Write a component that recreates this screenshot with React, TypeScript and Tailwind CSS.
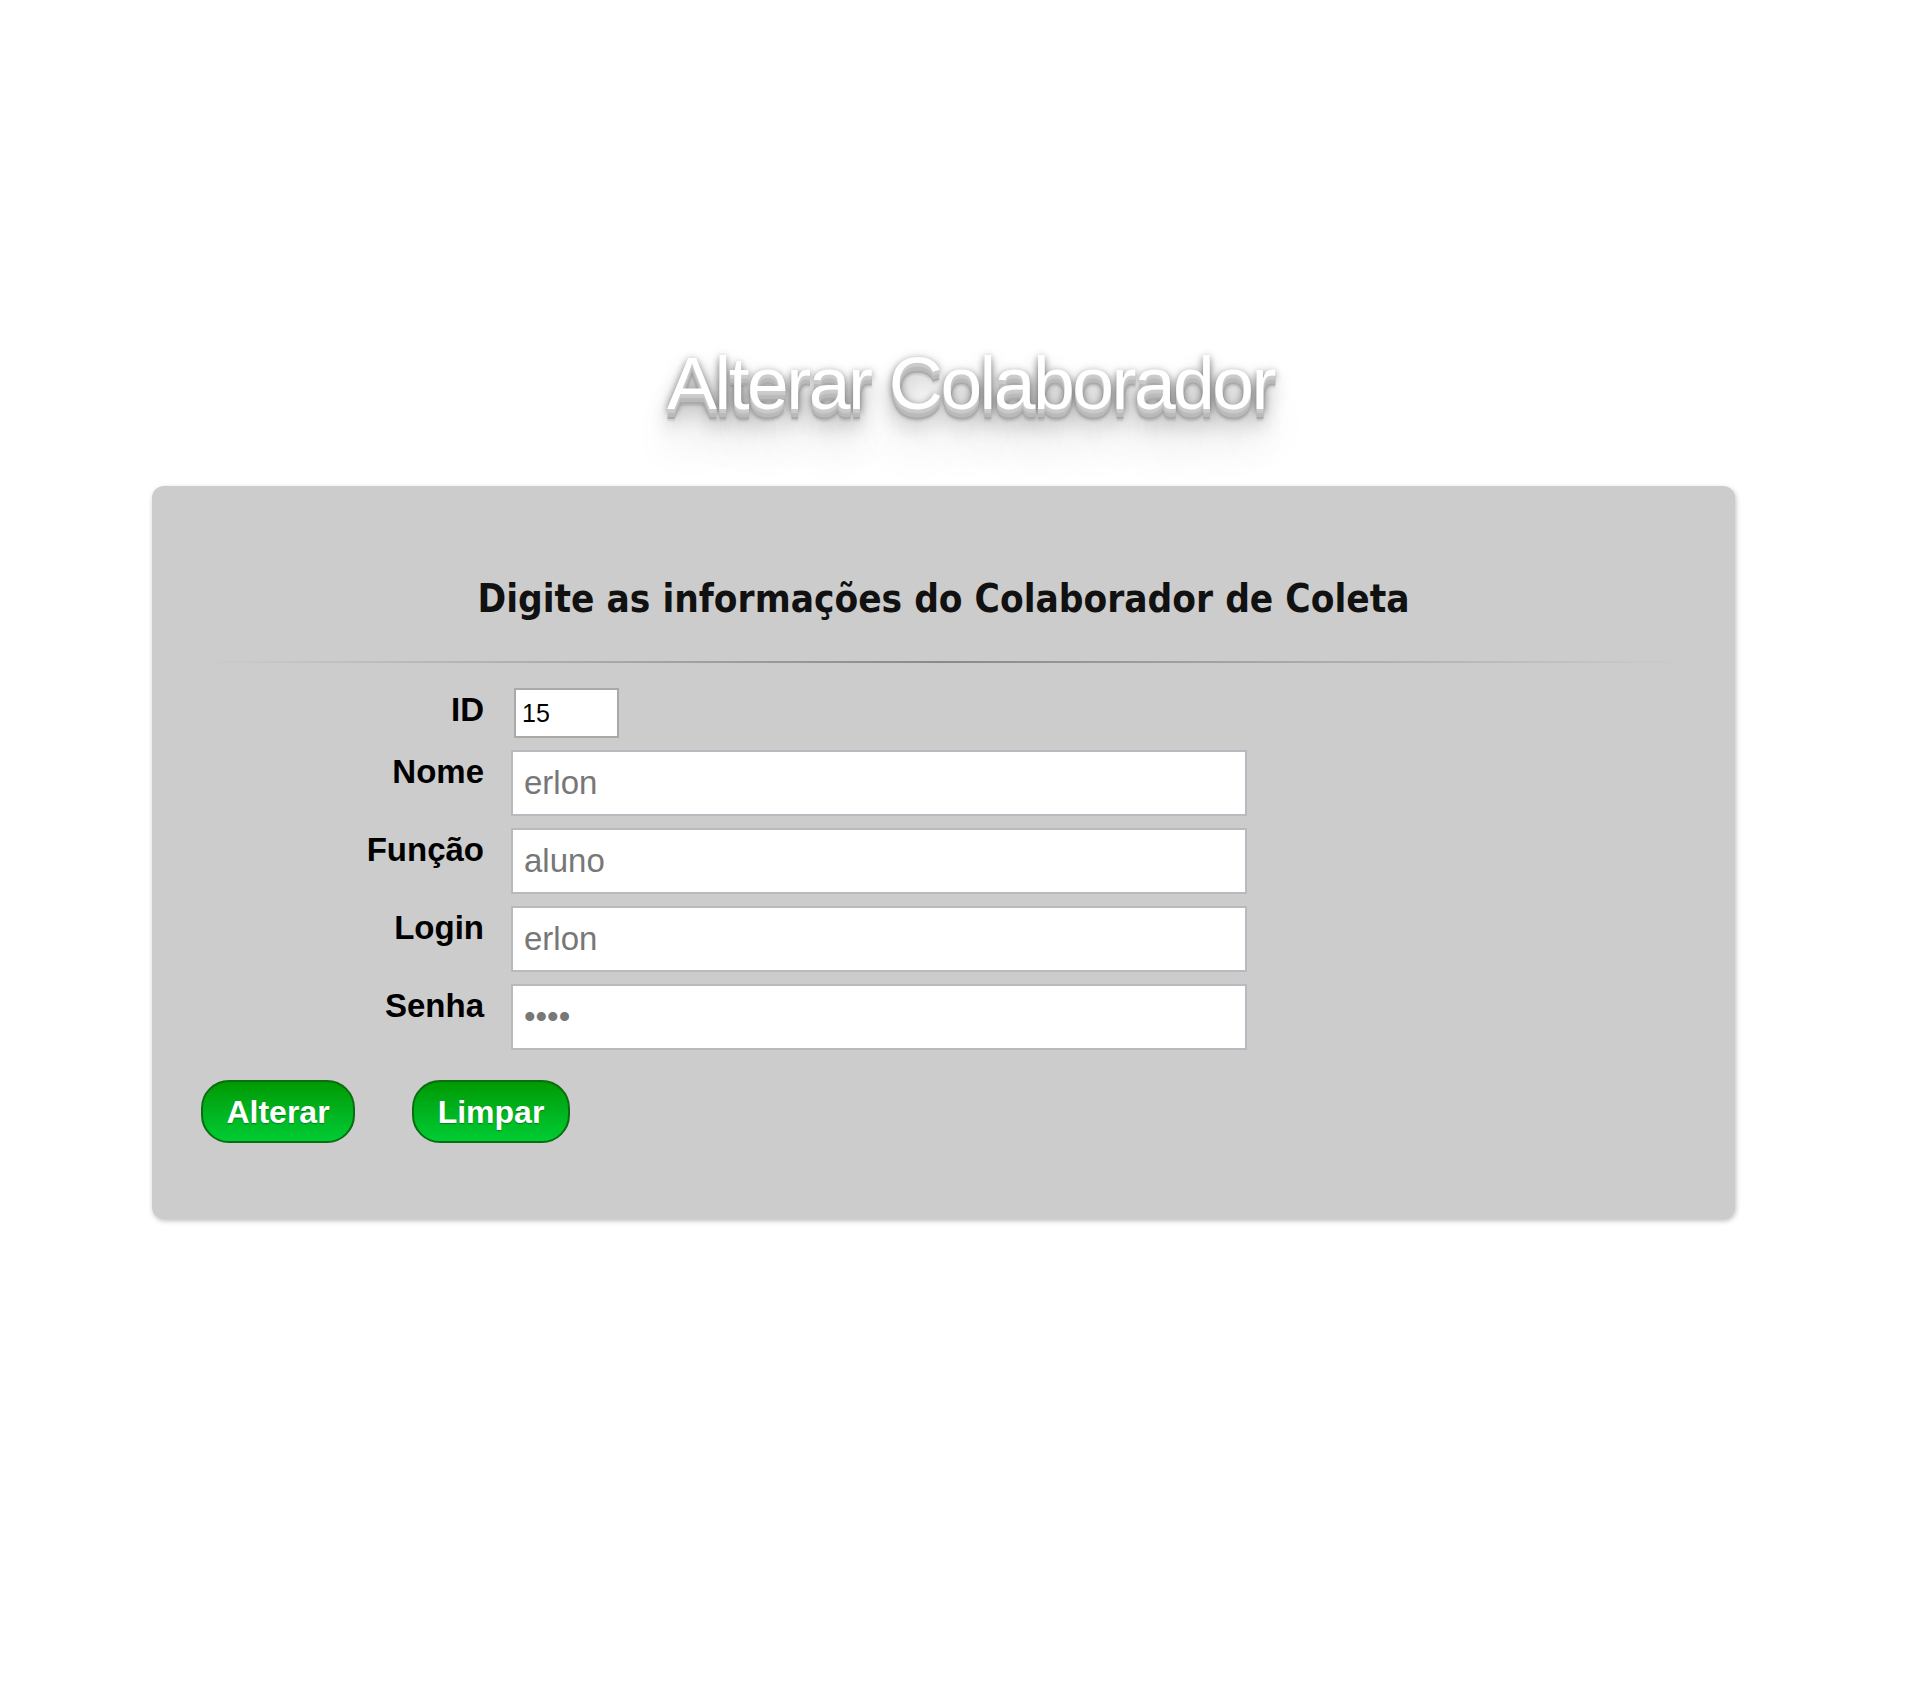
import { useState } from 'react';

const titleShadow =
  '[text-shadow:0_2px_0_#ccc,0_4px_0_#c9c9c9,0_6px_0_#bbb,0_8px_0_#b9b9b9,0_10px_0_#aaa,0_12px_2px_rgba(0,0,0,0.1),0_0_10px_rgba(0,0,0,0.1),0_2px_6px_rgba(0,0,0,0.3),0_6px_10px_rgba(0,0,0,0.2),0_10px_20px_rgba(0,0,0,0.25),0_20px_20px_rgba(0,0,0,0.2),0_40px_40px_rgba(0,0,0,0.15)]';

const inputClass =
  'h-[66px] w-[736px] border-2 border-[#b9b9c0] bg-white px-[11px] text-[33px] text-[#777] outline-none';

const labelClass = 'pt-[5px] text-right text-[33px] font-bold leading-none text-black';

export default function App() {
  const [id, setId] = useState('15');
  const [nome, setNome] = useState('erlon');
  const [funcao, setFuncao] = useState('aluno');
  const [login, setLogin] = useState('erlon');
  const [senha, setSenha] = useState('1234');

  return (
    <div className="min-h-screen bg-white font-['Liberation_Sans',Arial,sans-serif]">
      {/* Page title with 3D shadow */}
      <div className="flex justify-center pt-[346px] pl-[32px]">
        <h1 className={`text-[75px] leading-none tracking-[-2.5px] text-white ${titleShadow}`}>
          Alterar Colaborador
        </h1>
      </div>

      {/* Form card */}
      <div className="ml-[152px] mt-[65px] w-[1583px] rounded-[12px] bg-[#cccccc] px-[49px] pt-[94px] pb-[76px] shadow-[1px_2px_5px_rgba(0,0,0,0.25)]">
        <h2 className="text-center font-['DejaVu_Sans',sans-serif] text-[38.4px] font-bold leading-none font-stretch-condensed text-[#111]">
          Digite as informações do Colaborador de Coleta
        </h2>
        <div className="mt-[43px] h-[2px] bg-gradient-to-r from-transparent via-[#8a8a8a] to-transparent" />

        <div className="mt-[25px] grid grid-cols-[283px_auto] gap-x-[27px] gap-y-[12px]">
          <label className={labelClass}>ID</label>
          <div>
            <input
              value={id}
              onChange={(e) => setId(e.target.value)}
              className="ml-[3px] h-[50px] w-[105px] border-2 border-[#a9a9a9] bg-white px-[6px] text-[25px] text-black outline-none"
            />
          </div>

          <label className={labelClass}>Nome</label>
          <input value={nome} onChange={(e) => setNome(e.target.value)} className={inputClass} />

          <label className={labelClass}>Função</label>
          <input value={funcao} onChange={(e) => setFuncao(e.target.value)} className={inputClass} />

          <label className={labelClass}>Login</label>
          <input value={login} onChange={(e) => setLogin(e.target.value)} className={inputClass} />

          <label className={labelClass}>Senha</label>
          <input
            type="password"
            value={senha}
            onChange={(e) => setSenha(e.target.value)}
            className={inputClass}
          />
        </div>

        <div className="mt-[30px] flex gap-[57px]">
          <button className="h-[63px] w-[154px] rounded-[28px] border-2 border-[#0a6e10] bg-gradient-to-b from-[#009a00] to-[#00cc33] text-[32px] font-bold text-white [text-shadow:0_1px_1px_rgba(0,0,0,0.3)]">
            Alterar
          </button>
          <button className="h-[63px] w-[158px] rounded-[28px] border-2 border-[#0a6e10] bg-gradient-to-b from-[#009a00] to-[#00cc33] text-[32px] font-bold text-white [text-shadow:0_1px_1px_rgba(0,0,0,0.3)]">
            Limpar
          </button>
        </div>
      </div>
    </div>
  );
}
